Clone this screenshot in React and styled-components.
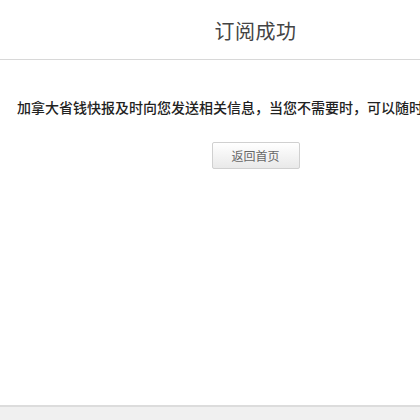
import styled, { createGlobalStyle } from "styled-components";

const GlobalStyle = createGlobalStyle`
  html, body {
    margin: 0;
    padding: 0;
    overflow: hidden;
    background: #fff;
  }
  body {
    font-family: "Liberation Sans", "Noto Sans CJK SC", sans-serif;
  }
`;

const Page = styled.div`
  width: 511px;
  min-height: 420px;
  display: flex;
  flex-direction: column;
`;

const Header = styled.div`
  height: 59px;
  width: 100vw;
  min-width: 511px;
  border-bottom: 1px solid #d8d8d8;
  display: flex;
  .inner {
    width: 511px;
    display: flex;
    align-items: center;
    justify-content: center;
  }
  h1 {
    margin: 0;
    padding-top: 2px;
    font-size: 20px;
    font-weight: normal;
    color: #444;
    letter-spacing: 0.5px;
  }
`;

const Main = styled.div`
  flex: 1;
  display: flex;
  flex-direction: column;
  align-items: center;
  padding-top: 36px;
`;

const Message = styled.p`
  align-self: flex-start;
  margin: 0;
  padding-left: 17px;
  font-family: "Noto Sans CJK SC", sans-serif;
  font-size: 14px;
  font-weight: 500;
  color: #222;
  white-space: nowrap;
  line-height: 22px;
`;

const BackButton = styled.button`
  margin-top: 24px;
  width: 88px;
  height: 27px;
  border: 1px solid #d0d0d0;
  border-radius: 2px;
  background: linear-gradient(#ffffff, #e9e9e9);
  font-family: "Liberation Sans", "Noto Sans CJK SC", sans-serif;
  font-size: 12px;
  color: #666;
  cursor: pointer;
`;

const Footer = styled.div`
  height: 13px;
  width: 100vw;
  min-width: 511px;
  border-top: 2px solid #dcdcdc;
  background: #f0f0f0;
`;

export default function App() {
  return (
    <>
      <GlobalStyle />
      <Page>
        <Header>
          <div className="inner">
            <h1>订阅成功</h1>
          </div>
        </Header>
        <Main>
          <Message>加拿大省钱快报及时向您发送相关信息，当您不需要时，可以随时退订。</Message>
          <BackButton>返回首页</BackButton>
        </Main>
        <Footer />
      </Page>
    </>
  );
}
